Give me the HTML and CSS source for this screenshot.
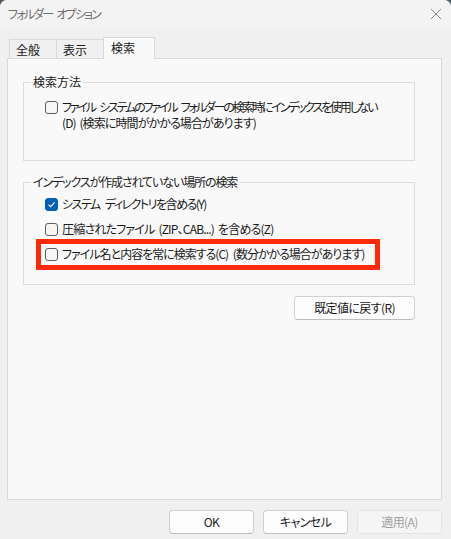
FILE: index.html
```html
<!DOCTYPE html>
<html lang="ja">
<head>
<meta charset="utf-8">
<title>フォルダー オプション</title>
<link rel="stylesheet" href="styles.css">
</head>
<body>
<div class="window">
  <div class="titlebar">
    <span class="title">フォルダー オプション</span>
    <svg class="close" width="12" height="12" viewBox="0 0 12 12"><path d="M1 1 L11 11 M11 1 L1 11" stroke="#8a8a8a" stroke-width="1" fill="none"/></svg>
  </div>
  <div class="body">
    <div class="tabs">
      <div class="tab first">全般</div>
      <div class="tab">表示</div>
      <div class="tab active">検索</div>
    </div>
    <div class="panel">
      <fieldset class="group g1">
        <legend>検索方法</legend>
        <label class="check">
          <span class="box"></span>
          <span class="text lines"><span class="line kana">ファイル システムのファイル フォルダーの検索時にインデックスを使用しない</span><span class="line">(D) (検索に時間がかかる場合があります)</span></span>
        </label>
      </fieldset>
      <fieldset class="group g2">
        <legend>インデックスが作成されていない場所の検索</legend>
        <label class="check">
          <span class="box checked"><svg width="9" height="9" viewBox="0 0 9 9"><path d="M1.5 4.6 L3.6 6.7 L7.6 2.3" stroke="#ffffff" stroke-width="1.1" fill="none"/></svg></span>
          <span class="text kana2">システム ディレクトリを含める(Y)</span>
        </label>
        <label class="check row">
          <span class="box"></span>
          <span class="text">圧縮されたファイル (ZIP、CAB...) を含める(Z)</span>
        </label>
        <div class="highlight">
          <label class="check">
            <span class="box"></span>
            <span class="text mid">ファイル名と内容を常に検索する(C) (数分かかる場合があります)</span>
          </label>
        </div>
      </fieldset>
      <div class="restore-row">
        <button class="btn restore">既定値に戻す(R)</button>
      </div>
    </div>
    <div class="footer">
      <button class="btn">OK</button>
      <button class="btn">キャンセル</button>
      <button class="btn disabled">適用(A)</button>
    </div>
  </div>
</div>
</body>
</html>
```

FILE: styles.css
```css
* { box-sizing: border-box; }
html, body {
  margin: 0;
  padding: 0;
  background: #4d5a60;
}
body {
  width: 451px;
  height: 539px;
  overflow: hidden;
  font-family: "Noto Sans CJK JP", sans-serif;
  font-feature-settings: "palt";
  font-size: 12px;
  line-height: 16px;
  color: #1a1a1a;
}
.window {
  width: 451px;
  height: 539px;
  background: #f0f0f0;
  border-radius: 7px 7px 0 0;
  overflow: hidden;
  display: flex;
  flex-direction: column;
}
.titlebar {
  height: 28px;
  background: #f3f3f3;
  display: flex;
  align-items: center;
  justify-content: space-between;
  padding: 0 9px 0 8px;
}
.title {
  color: #6e6e6e;
  font-size: 12px;
  letter-spacing: -1.8px;
  word-spacing: 3px;
}
.close { display: block; }
.body {
  flex: 1;
  padding: 9px 9px 0 7px;
  display: flex;
  flex-direction: column;
}
.tabs {
  display: flex;
  align-items: flex-end;
  padding-left: 2px;
}
.tab {
  width: 48px;
  height: 19px;
  padding: 2px 0 0 6px;
  border: 1px solid #dadada;
  border-bottom: none;
  background: #f0f0f0;
  margin-left: -1px;
  white-space: nowrap;
}
.tab.first { margin-left: 0; }
.tab.active {
  width: 52px;
  height: 22px;
  padding-left: 7px;
  background: #f9f9f9;
  margin-bottom: -1px;
  position: relative;
  z-index: 1;
}
.panel {
  width: 435px;
  height: 442px;
  background: #f9f9f9;
  border: 1px solid #dadada;
  padding: 0;
  display: flex;
  flex-direction: column;
}
.group {
  width: 392px;
  margin: 0 0 0 15px;
  border: 1px solid #dcdcdc;
  padding: 0;
  min-width: 0;
}
.group legend {
  margin-left: 7px;
  padding: 0 2px;
  line-height: 16px;
  white-space: nowrap;
}
.g2 legend { letter-spacing: -1.1px; }
.g1 {
  margin-top: 15px;
  padding: 9px 0 29px 0;
}
.g2 {
  margin-top: 13px;
  padding: 6px 0 14px 0;
}
.g1 > .check,
.g2 > .check { margin-left: 21px; }
.check {
  display: flex;
  align-items: flex-start;
  gap: 4px;
  white-space: nowrap;
}
.check.row { margin-top: 9px; }
.text {
  letter-spacing: -0.8px;
  word-spacing: 2px;
}
.lines {
  display: flex;
  flex-direction: column;
}
.line { letter-spacing: -0.9px; word-spacing: 2px; }
.line.kana { letter-spacing: -2.2px; word-spacing: 4px; }
.text.kana2 { letter-spacing: -1.5px; word-spacing: 4px; }
.text.mid { letter-spacing: -1px; word-spacing: 3px; }
.box {
  width: 13px;
  height: 13px;
  margin-top: 2px;
  flex: none;
  border: 1px solid #5f5f5f;
  border-radius: 3px;
  background: #f6f6f6;
  display: flex;
  align-items: center;
  justify-content: center;
}
.box.checked {
  background: #005fb8;
  border-color: #005fb8;
}
.box svg { display: block; }
.highlight {
  width: 344px;
  margin: 2px 0 0 12px;
  border: 5px solid #ff2a0a;
  padding: 2px 0 3px 4px;
}
.restore-row {
  width: 392px;
  margin: 11px 0 0 15px;
  display: flex;
  justify-content: flex-end;
}
.btn {
  font-family: "Noto Sans CJK JP", sans-serif;
  font-feature-settings: "palt";
  font-size: 12px;
  line-height: 16px;
  letter-spacing: -0.6px;
  color: #1a1a1a;
  height: 24px;
  width: 85px;
  padding: 0;
  background: #fdfdfd;
  border: 1px solid #d0d0d0;
  border-bottom-color: #bdbdbd;
  border-radius: 4px;
}
.btn.restore { width: 121px; }
.btn.disabled {
  background: #f5f5f5;
  color: #a0a0a0;
  border-color: #e5e5e5;
}
.footer {
  display: flex;
  justify-content: flex-end;
  gap: 9px;
  padding: 10px 0 0 0;
}
```
